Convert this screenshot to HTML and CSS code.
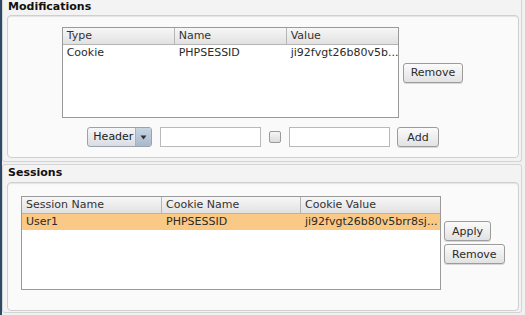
FILE: index.html
```html
<!DOCTYPE html>
<html lang="en">
  <head>
    <meta charset="UTF-8" />
    <meta name="viewport" content="width=device-width, initial-scale=1.0" />
    <title>Session Manager</title>
    <link rel="stylesheet" href="styles.css">
  </head>
  <body>
    <div class="window">
      <div class="section first">
        <h2 class="title">Modifications</h2>
        <div class="panel mod-panel">
          <div class="table-row">
            <div class="grid mod-table">
              <div class="head">
                <div class="cell c-type">Type</div>
                <div class="cell c-name">Name</div>
                <div class="cell c-value">Value</div>
              </div>
              <div class="row">
                <div class="cell c-type">Cookie</div>
                <div class="cell c-name">PHPSESSID</div>
                <div class="cell c-value">ji92fvgt26b80v5b...</div>
              </div>
            </div>
            <button class="btn">Remove</button>
          </div>
          <div class="add-row">
            <div class="combo">
              <span class="combo-text">Header</span>
              <span class="combo-arrow">
                <svg width="7" height="5" viewBox="0 0 7 5"><path d="M0.5 0.5 L6.5 0.5 L3.5 4.5 Z" fill="#333"/></svg>
              </span>
            </div>
            <input class="field" type="text" />
            <span class="check"></span>
            <input class="field" type="text" />
            <button class="btn add-btn">Add</button>
          </div>
        </div>
      </div>
      <div class="section second">
        <h2 class="title">Sessions</h2>
        <div class="panel sess-panel">
          <div class="grid sess-table">
            <div class="head">
              <div class="cell c-sname">Session Name</div>
              <div class="cell c-cname">Cookie Name</div>
              <div class="cell c-cvalue">Cookie Value</div>
            </div>
            <div class="row selected">
              <div class="cell c-sname">User1</div>
              <div class="cell c-cname">PHPSESSID</div>
              <div class="cell c-cvalue">ji92fvgt26b80v5brr8sj...</div>
            </div>
          </div>
          <div class="side-btns">
            <button class="btn">Apply</button>
            <button class="btn">Remove</button>
          </div>
        </div>
      </div>
    </div>
  </body>
</html>
```

FILE: styles.css
```css
body {
  margin: 0;
  background-color: #f0f0f0;
  font-family: "DejaVu Sans", "Liberation Sans", sans-serif;
  font-size: 11px;
  color: #2b2b2b;
}
.window {
  width: 525px;
  height: 315px;
  border-left: 2px solid #2c4a68;
  box-sizing: border-box;
  background-color: #f1f1f1;
  overflow: hidden;
}
.section {
  border: 1px solid #d4d4d4;
  border-radius: 3px;
  background-color: #f3f3f3;
  margin-right: 3px;
  padding: 0 2px 0 4px;
}
.first {
  border-top: none;
  border-radius: 0 0 3px 3px;
  height: 162px;
  box-sizing: border-box;
}
.second {
  margin-top: 2px;
  height: 149px;
  box-sizing: border-box;
}
.title {
  margin: 0;
  font-size: 11px;
  font-weight: bold;
  color: #111;
  height: 15px;
  line-height: 14px;
  padding-left: 1px;
}
.second .title {
  padding-top: 1px;
  height: 16px;
}
.panel {
  border: 1px solid #cfcfcf;
  border-radius: 4px;
  background-color: #fafafa;
  box-shadow: inset 0 1px 1px #e4e4e4;
}
.mod-panel {
  height: 143px;
  box-sizing: border-box;
  display: flex;
  flex-direction: column;
  align-items: center;
  padding-top: 11px;
}
.table-row {
  display: flex;
  align-items: center;
  gap: 4px;
  margin-left: -1px;
}
.grid {
  background-color: #fff;
  border: 1px solid #9a9a9a;
  box-sizing: border-box;
}
.mod-table {
  width: 337px;
  height: 91px;
}
.head {
  display: flex;
  height: 17px;
  background: linear-gradient(#f7f7f7, #e1e1e1);
  border-bottom: 1px solid #b4b4b4;
  box-sizing: border-box;
}
.row {
  display: flex;
  height: 16px;
}
.cell {
  padding-left: 4px;
  line-height: 16px;
  box-sizing: border-box;
  white-space: nowrap;
  overflow: hidden;
}
.head .cell {
  border-right: 1px solid #b4b4b4;
  color: #333;
}
.head .cell:last-child {
  border-right: none;
}
.c-type { width: 112px; }
.c-name { width: 112px; }
.c-value { flex: 1; }
.c-sname { width: 140px; }
.c-cname { width: 139px; }
.c-cvalue { flex: 1; }
.selected {
  background-color: #fac985;
}
.btn {
  font-family: "DejaVu Sans", "Liberation Sans", sans-serif;
  font-size: 11px;
  color: #2b2b2b;
  height: 20px;
  padding: 0 7px;
  border: 1px solid #9c9c9c;
  border-radius: 3px;
  background: linear-gradient(#fbfbfb, #e2e2e2);
  box-shadow: 0 1px 0 #d8d8d8;
}
.add-btn {
  padding: 0 9px;
}
.add-row {
  display: flex;
  align-items: center;
  gap: 8px;
  margin-top: 9px;
  height: 20px;
}
.add-row .add-btn {
  margin-left: -1px;
}
.combo {
  display: flex;
  width: 65px;
  height: 20px;
  border: 1px solid #9aa3ad;
  border-radius: 3px;
  box-sizing: border-box;
  background: linear-gradient(#f4f6f8, #d9dde2);
  overflow: hidden;
}
.combo-text {
  flex: 1;
  line-height: 18px;
  padding-left: 5px;
  color: #222;
}
.combo-arrow {
  width: 15px;
  display: flex;
  align-items: center;
  justify-content: center;
  border-left: 1px solid #a8b2bd;
  background: linear-gradient(#c8d4e2, #a9b9cc);
}
.field {
  width: 101px;
  height: 20px;
  box-sizing: border-box;
  border: 1px solid #b9b9b9;
  background-color: #fff;
  margin: 0;
  padding: 0 3px;
}
.check {
  width: 12px;
  height: 12px;
  box-sizing: border-box;
  border: 1px solid #9a9a9a;
  border-radius: 2px;
  background: linear-gradient(#f6f6f6, #dcdcdc);
}
.sess-panel {
  height: 129px;
  box-sizing: border-box;
  display: flex;
  padding: 13px 0 0 13px;
  gap: 3px;
}
.sess-table {
  width: 420px;
  height: 94px;
}
.side-btns {
  display: flex;
  flex-direction: column;
  align-items: flex-start;
  gap: 3px;
  padding-top: 25px;
}
```
